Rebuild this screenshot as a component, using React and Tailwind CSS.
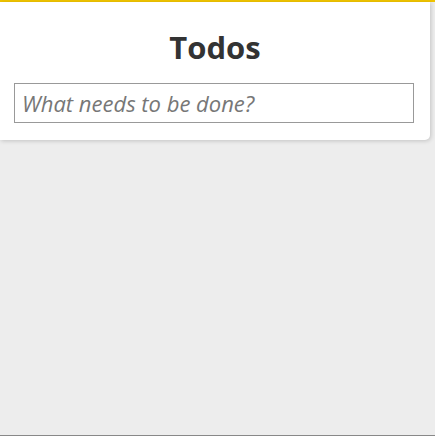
export default function App() {
  return (
    <div className="h-[436px] w-[435px] bg-[#ededed] border-t-2 border-[#f0c400] flex flex-col" style={{ fontFamily: '"Open Sans", "Noto Sans", sans-serif' }}>
      <div className="w-[430px] h-[138px] bg-white rounded-br-[5px] shadow-[1px_1px_4px_rgba(0,0,0,0.18)] px-[14px] pt-[25px]">
        <h1 className="text-center text-[31px] font-bold text-[#333] leading-[40px]">Todos</h1>
        <input
          className="mt-[16px] w-[400px] h-[40px] border border-[#999] px-[7px] text-[22px] italic text-[#333] placeholder:text-[#777] outline-none"
          placeholder="What needs to be done?"
        />
      </div>
      <div className="flex-1" />
      <div className="h-px bg-[#888]" />
    </div>
  );
}
